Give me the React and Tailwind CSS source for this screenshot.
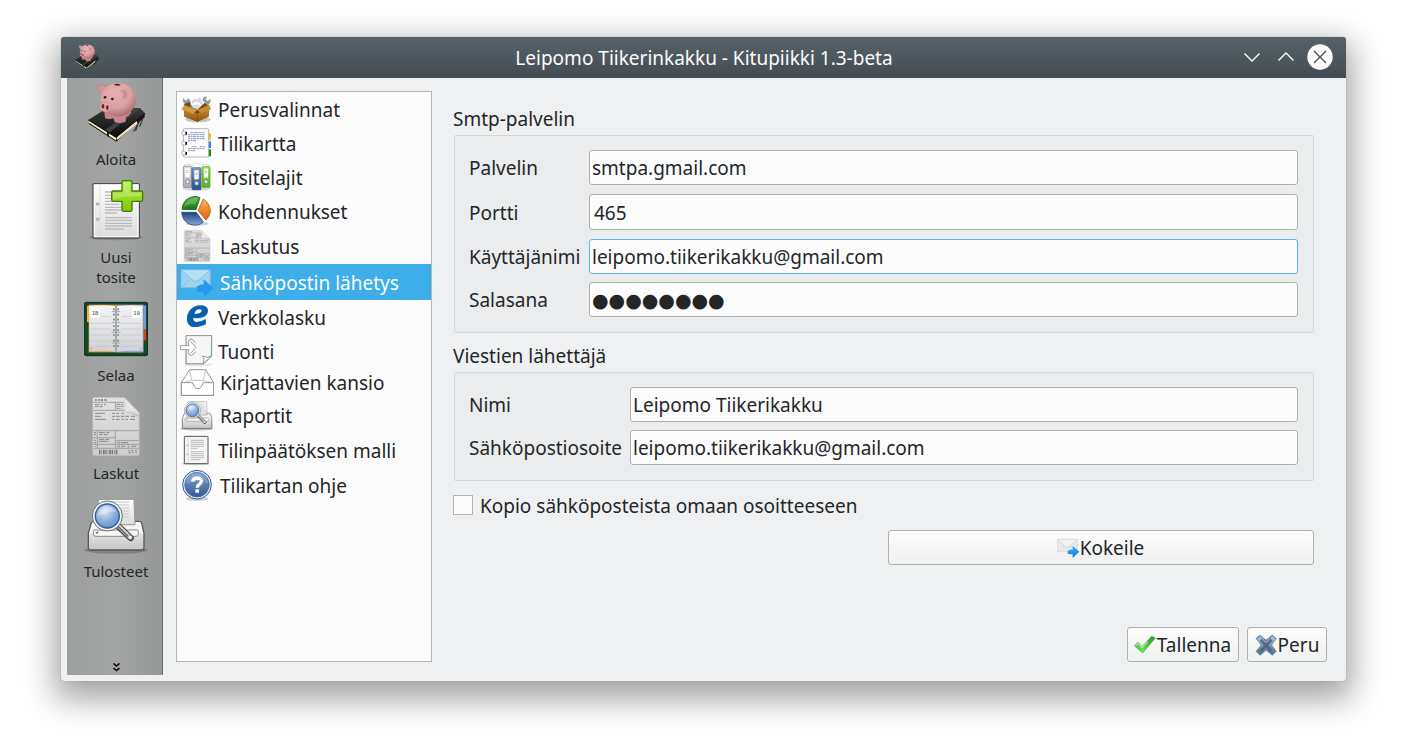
import React from "react";

function Gradient({ id, from, to, horizontal }) {
  return (
    <linearGradient id={id} x1="0" y1="0" x2={horizontal ? "1" : "0"} y2={horizontal ? "0" : "1"}>
      <stop offset="0" stopColor={from} />
      <stop offset="1" stopColor={to} />
    </linearGradient>
  );
}

function SharedGradients() {
  return (
    <svg className="absolute h-0 w-0" aria-hidden="true">
      <defs>
        <radialGradient id="pig" cx="0.4" cy="0.3" r="0.75">
          <stop offset="0" stopColor="#e6b0b3" />
          <stop offset="0.6" stopColor="#dba0a4" />
          <stop offset="1" stopColor="#a5666c" />
        </radialGradient>
        <radialGradient id="lens" cx="0.4" cy="0.3" r="0.8">
          <stop offset="0" stopColor="#dbe8f6" />
          <stop offset="0.5" stopColor="#8fb1da" />
          <stop offset="1" stopColor="#5d88c2" />
        </radialGradient>
        <Gradient id="cover" from="#3a3a3a" to="#0c0c0c" />
        <Gradient id="paper" from="#ffffff" to="#dcdcdc" />
        <Gradient id="plus" from="#b5ee3c" to="#7fc810" />
        <Gradient id="page" from="#f4f4f5" to="#cfd1d4" />
        <Gradient id="bill" from="#e2e2e2" to="#cdcdcd" />
        <Gradient id="tray" from="#fafafa" to="#c4c4c4" />
        <Gradient id="carton" from="#c9872c" to="#8a5409" />
        <Gradient id="bluebinder" from="#7fa0cf" to="#2a5090" />
        <Gradient id="greenbinder" from="#a3e84c" to="#57b512" />
        <Gradient id="greybinder" from="#dedede" to="#b0b0b0" />
        <Gradient id="piegreen" from="#5cb84a" to="#0c7612" />
        <Gradient id="pieorange" from="#ffb45c" to="#dd6108" />
        <Gradient id="pieblue" from="#1d3f78" to="#86a9d8" />
        <Gradient id="help" from="#7e9fcc" to="#345c99" />
        <Gradient id="arrow" from="#3fb4f5" to="#0c78dc" />
        <Gradient id="tick" from="#2a9a28" to="#6df05c" />
        <Gradient id="cross" from="#b9cbdc" to="#4c6685" />
      </defs>
    </svg>
  );
}

function PigDrawing() {
  return (
    <>
      <path d="M116 272 L210 232 L284 249 L286 256 L199 335 L117 283 Z" fill="#4b4b48" opacity=".35" />
      <path d="M117 270 L117 279 L197 333 L200 321 Z" fill="#f1e5bf" />
      <path d="M199 321 L198 333 L284 262 L283 249 Z" fill="#151515" />
      <path d="M200 322 L200 331 L262 281 L260 272 Z" fill="#efe3bd" />
      <path d="M115 270 L170 235 L270 234 L285 250 L198 322 Z" fill="url(#cover)" />
      <path d="M164 301 L258 234 L269 237 L176 309 Z" fill="#3f4143" />
      <path d="M171 304 L177 309 L176 321 L171 318 Z" fill="#171717" />
      <path d="M115 270 L198 322 L285 250" fill="none" stroke="#090909" strokeWidth="3" />
      <path d="M117 280 L198 333 L205 329" fill="none" stroke="#111" strokeWidth="3" />
      <path d="M250 305 L281 254 M257 303 L263 283 M269 290 L279 264" stroke="#222" strokeWidth="3" fill="none" />
      <path d="M162 235 L165 264 Q175 269 190 265 L194 276 Q208 283 227 275 L228 261 Q237 258 243 248 L245 215 Z" fill="#c8858a" />
      <path d="M141 167 Q158 162 172 169 L158 193 Q145 190 141 167 Z" fill="#d39296" stroke="#aa7075" strokeWidth="1" />
      <ellipse cx="205" cy="209" rx="53" ry="50" fill="url(#pig)" />
      <path d="M210 184 Q225 172 232 187 Q236 201 223 208 Q213 203 221 194 Q219 186 210 184 Z" fill="#c18a8e" opacity=".75" />
      <path d="M191 164 Q202 158 213 165 Q202 170 191 164 Z" fill="#5a2529" />
      <ellipse cx="167" cy="231" rx="18" ry="15" fill="#e0a4a8" stroke="#bd7c82" strokeWidth="1" />
      <ellipse cx="159" cy="229" rx="4" ry="7" fill="#6b272d" />
      <ellipse cx="172" cy="233" rx="4" ry="7" fill="#6b272d" />
      <circle cx="165" cy="202" r="4" fill="#2b1518" />
      <circle cx="187" cy="207" r="4" fill="#2b1518" />
    </>
  );
}

function PigIcon({ className }) {
  return (
    <svg className={className} viewBox="102 150 192 192">
      <PigDrawing />
    </svg>
  );
}

function NewReceiptIcon({ className }) {
  return (
    <svg className={className} viewBox="54 9 192 192">
      <ellipse cx="150" cy="187" rx="82" ry="9" fill="#555" opacity=".35" />
      <rect x="81" y="26" width="139" height="163" rx="4" fill="url(#paper)" stroke="#4f4f4f" strokeWidth="4" />
      <rect x="85" y="30" width="131" height="155" fill="none" stroke="#fff" strokeWidth="3" />
      <path d="M102 30 V185" stroke="#d4d4d4" strokeWidth="2" />
      <g fill="#fff" stroke="#777" strokeWidth="2.5">
        <circle cx="95" cy="87" r="3.5" />
        <circle cx="95" cy="133" r="3.5" />
      </g>
      <path d="M117 51 H160 M117 61 H150 M117 70 H145 M117 79 H150 M117 88 H160 M117 97 H198 M117 105 H198 M117 114 H153 M117 128 H198 M117 136 H198 M117 145 H198 M117 153 H198 M117 162 H174" stroke="#bcbcbc" strokeWidth="4" />
      <path d="M168 22 Q168 17 173 17 H192 Q198 17 198 22 V48 H225 Q230 48 230 53 V74 Q230 79 225 79 H198 V104 Q198 109 193 109 H173 Q168 109 168 104 V79 H142 Q137 79 137 74 V53 Q137 48 142 48 H168 Z" fill="url(#plus)" stroke="#437b08" strokeWidth="4" />
      <path d="M172 22 H193 V53 H225 V63 Q160 64 141 74 V53 H172 Z" fill="#fff" opacity=".23" />
    </svg>
  );
}

function PlannerIcon({ className }) {
  return (
    <svg className={className} viewBox="54 3 192 192">
      <rect x="55" y="22" width="190" height="160" rx="6" fill="#12482a" stroke="#092d18" strokeWidth="3" />
      <path d="M63 32 H69 V81 H63 Z" fill="#ffae37" />
      <path d="M232 31 H240 V104 H232 Z" fill="#7796dc" />
      <path d="M232 104 H240 V136 H232 Z" fill="#df3b23" />
      <rect x="68" y="29" width="164" height="143" fill="#e8a044" />
      <rect x="151" y="30" width="81" height="142" fill="#89a6de" />
      <path d="M69 32 Q108 29 143 33 Q150 36 157 33 Q194 29 230 32 V168 Q190 166 150 170 Q110 166 70 169 Z" fill="url(#page)" />
      <path d="M104 65 H135 M168 65 H197 M74 85 H136 M166 85 H225 M74 102 H136 M166 102 H225 M74 120 H136 M166 120 H225 M74 138 H136 M166 138 H225 M80 154 H136 M166 154 H220" stroke="#c4c6c9" strokeWidth="2" />
      <rect x="74" y="39" width="27" height="29" rx="3" fill="#fff" />
      <rect x="199" y="39" width="27" height="29" rx="3" fill="#fff" />
      <g fontFamily="Liberation Sans, sans-serif" fontWeight="700" fontSize="18" fill="#77797c">
        <text x="77" y="59">18</text>
        <text x="202" y="59">19</text>
      </g>
      <path d="M150 32 V170" stroke="#999da0" strokeWidth="5" />
      <path d="M141 43 H159 M141 59 H159 M141 74 H159 M141 93 H159 M141 105 H159 M141 120 H159 M141 137 H159 M141 153 H159" stroke="#75797c" strokeWidth="5" strokeDasharray="5 8" />
      <path d="M137 50 H163 M137 83 H163 M137 112 H163 M137 144 H163" stroke="#a4a7a9" strokeWidth="3" />
      <path d="M73 158 L79 164 M227 158 L221 164" stroke="#777" strokeWidth="2" />
    </svg>
  );
}

function BillDrawing() {
  return (
    <>
      <path d="M84 22 H174 L220 69 V192 Q220 197 215 197 H85 Q80 197 80 192 V26 Q80 22 84 22 Z" fill="url(#bill)" stroke="#b3b3b3" strokeWidth="2" />
      <path d="M174 22 Q181 42 176 65 Q204 61 220 70 Z" fill="#e8e8e8" stroke="#bfbfbf" strokeWidth="1" />
      <path d="M178 68 Q202 65 219 75 V82 Q202 70 178 68 Z" fill="#aaa" opacity=".55" />
      <path d="M82 37 H174 M82 61 H175 M148 37 V61 M148 49 H174 M82 122 H219 M82 143 H148 M148 122 V175 M94 122 V175 M148 152 H219 M82 163 H219 M82 175 H219 M160 152 V175 M187 163 V175" fill="none" stroke="#a0a0a0" strokeWidth="3" />
      <path d="M86 44 H101 M105 44 H110 M114 44 H120 M86 50 H97 M100 50 H110 M152 43 H163 M166 43 H172 M152 55 H161 M165 55 H168 M87 70 H117 M87 79 H105 M87 88 H120 M138 70 H147 M150 70 H159 M167 70 H174 M138 79 H147 M150 79 H161 M165 79 H175 M178 79 H189 M195 79 H207 M138 88 H145 M150 88 H161 M167 88 H174 M178 88 H186 M192 88 H207 M99 128 H117 M121 128 H130 M99 134 H110 M114 134 H125 M99 148 H115 M119 148 H130 M99 154 H124 M127 154 H130 M84 128 H90 M84 134 H90 M84 151 H90 M84 158 H90 M87 169 H91 M153 158 H157 M165 158 H186 M153 169 H157 M165 169 H177 M196 169 H210 M187 182 H192 M195 182 H201 M205 182 H213 M187 188 H195 M198 188 H203 M208 188 H213" stroke="#888" strokeWidth="3" />
      <path d="M87 30 H92 M96 30 H101 M104 30 H111 M115 30 H122" stroke="#8c8c8c" strokeWidth="6" />
      <path d="M99 186 H154" stroke="#777" strokeWidth="13" strokeDasharray="4 3 2 3 5 2" />
    </>
  );
}

function BillIcon({ className }) {
  return (
    <svg className={className} viewBox="54 12 192 192">
      <BillDrawing />
    </svg>
  );
}

function ReportDrawing() {
  return (
    <>
      <ellipse cx="150" cy="181" rx="95" ry="10" fill="#444" opacity=".35" />
      <path d="M83 94 H219 Q224 94 227 99 L234 130 V173 Q234 180 227 180 H74 Q67 180 67 173 V130 L76 99 Q78 94 83 94 Z" fill="url(#tray)" stroke="#595959" strokeWidth="4" />
      <path d="M71 131 L80 99 H221 L230 131" fill="#f4f4f4" stroke="#fff" strokeWidth="2" />
      <path d="M86 120 H213 Q217 120 217 124 V133 Q217 139 209 139 H90 Q82 139 82 132 V125 Q82 120 86 120 Z" fill="#f7f7f7" stroke="#888" strokeWidth="3" />
      <path d="M99 28 H201 Q204 28 204 31 L207 104 H101 L97 32 Z" fill="url(#paper)" stroke="#969696" strokeWidth="3" />
      <path d="M126 36 H190 M144 45 H190 M150 54 H190 M152 63 H190 M155 72 H190 M160 81 H190" stroke="#c6c6c6" strokeWidth="3" />
      <path d="M151 103 L194 144" stroke="#484848" strokeWidth="19" strokeLinecap="round" />
      <path d="M151 103 L193 143" stroke="#bdbdbd" strokeWidth="12" strokeLinecap="round" />
      <path d="M154 99 L187 131" stroke="#f5f5f5" strokeWidth="3" strokeLinecap="round" />
      <path d="M155 109 L185 138" stroke="#666" strokeWidth="4" strokeLinecap="round" />
      <circle cx="193" cy="142" r="5" fill="#f3f3f3" />
      <circle cx="124" cy="78" r="45" fill="#f1f1f1" stroke="#707070" strokeWidth="3" />
      <circle cx="124" cy="78" r="36" fill="url(#lens)" stroke="#2e5f9e" strokeWidth="4" />
      <path d="M94 79 Q100 51 126 49 Q143 50 151 65 Q120 65 94 79 Z" fill="#fff" opacity=".32" />
      <path d="M88 128 L98 124 L94 132 Z" fill="#555" />
    </>
  );
}

function ReportIcon({ className }) {
  return (
    <svg className={className} viewBox="54 6 192 192">
      <ReportDrawing />
    </svg>
  );
}

function ToolboxIcon({ className }) {
  return (
    <svg className={className} viewBox="12 12 102 105">
      <ellipse cx="66" cy="94" rx="38" ry="9" fill="#000" opacity=".22" />
      <path d="M22 31 L27 38 L34 37 L36 31 L43 39 L39 46 L62 61 L54 68 L31 49 L22 43 Z" fill="#8f9ba5" stroke="#66737d" />
      <path d="M77 62 L88 45 L80 36 Q82 26 92 26 L88 35 L94 40 L103 35 Q104 45 95 49 L84 67 Z" fill="#8f9ba5" stroke="#66737d" />
      <path d="M49 39 Q55 31 62 36 L71 31 L79 46 L74 62 H49 Z" fill="#d7dfe5" stroke="#8da0af" />
      <path d="M48 51 Q63 39 74 52" fill="none" stroke="#fff" strokeWidth="6" />
      <path d="M25 47 L43 42 L43 58 L64 66 L85 45 L98 53 L98 85 L64 101 L25 85 Z" fill="#74460a" />
      <path d="M25 67 L64 76 L98 65 V86 L64 101 L25 86 Z" fill="url(#carton)" />
      <path d="M26 51 L64 66 L50 79 L17 64 Z" fill="#d29b43" stroke="#8d6018" />
      <path d="M64 66 L98 50 L104 63 L77 78 Z" fill="#c88a2d" stroke="#8d6018" />
      <path d="M64 68 V99" stroke="#74460a" strokeWidth="2" />
    </svg>
  );
}

function NotebookIcon({ className }) {
  return (
    <svg className={className} viewBox="12 117 102 102">
      <path d="M94 136 H105 V155 H94 Z" fill="#ffbf0d" />
      <path d="M94 160 H105 V180 H94 Z" fill="#287aff" />
      <path d="M94 184 H105 V205 H94 Z" fill="#168806" />
      <rect x="22" y="122" width="76" height="85" rx="3" fill="#fcfcfc" stroke="#aaa" strokeWidth="2.5" />
      <g fill="#fff" stroke="#999" strokeWidth="2">
        <path d="M30 130 H19 Q16 136 19 141 H30" />
        <path d="M30 160 H19 Q16 166 19 171 H30" />
        <path d="M30 190 H19 Q16 196 19 201 H30" />
      </g>
      <path d="M28 132 H33 V140 H28 Z M28 162 H33 V170 H28 Z M28 192 H33 V200 H28 Z" fill="#111" />
      <path d="M43 134 H86 M36 140 H87 M36 146 H84 M36 152 H87 M36 158 H61 M49 176 H62 M71 176 H88 M36 182 H87 M36 188 H57" stroke="#7385b2" strokeWidth="2.5" strokeDasharray="7 2 4 1 10 2" />
    </svg>
  );
}

function BindersIcon({ className }) {
  return (
    <svg className={className} viewBox="12 219 102 102">
      <ellipse cx="62" cy="301" rx="42" ry="8" fill="#000" opacity=".15" />
      <path d="M25 229 H45 V243 H25 Z" fill="#f8f8f8" stroke="#aaa" />
      <path d="M52 229 L57 226 L62 229 L68 226 L72 229 V242 H50 Z" fill="#fff" stroke="#aaa" />
      <path d="M80 230 H99 V243 H80 Z" fill="#f8f8f8" stroke="#aaa" />
      <rect x="22" y="235" width="25" height="63" rx="3" fill="url(#greybinder)" stroke="#777" strokeWidth="2" />
      <rect x="48" y="239" width="27" height="66" rx="3" fill="url(#bluebinder)" stroke="#365888" strokeWidth="2" />
      <rect x="78" y="236" width="24" height="62" rx="3" fill="url(#greenbinder)" stroke="#529425" strokeWidth="2" />
      <g fill="#fff">
        <rect x="28" y="241" width="13" height="27" />
        <rect x="55" y="247" width="13" height="27" />
        <rect x="84" y="242" width="12" height="27" />
      </g>
      <path d="M31 248 H38 M31 253 H38 M58 255 H65 M58 260 H65 M87 249 H93 M87 254 H93" stroke="#999" strokeWidth="2" />
      <g fill="#e9eef3" stroke="#586b80" strokeWidth="2">
        <circle cx="35" cy="281" r="6" />
        <circle cx="62" cy="286" r="6" />
        <circle cx="90" cy="281" r="6" />
      </g>
    </svg>
  );
}

function PieIcon({ className }) {
  return (
    <svg className={className} viewBox="12 321 102 102">
      <ellipse cx="63" cy="407" rx="35" ry="6" fill="#000" opacity=".18" />
      <path d="M18 364 Q22 327 60 325 L72 329 L60 365 Z" fill="url(#piegreen)" stroke="#156c18" strokeWidth="2.5" />
      <path d="M23 360 Q27 333 58 330 L65 332 L57 349 Q38 345 23 360 Z" fill="#fff" opacity=".2" />
      <path d="M82 333 Q105 350 103 372 Q101 386 90 396 L66 368 Z" fill="url(#pieorange)" stroke="#b95a08" strokeWidth="2.5" />
      <path d="M17 373 H61 L82 402 Q66 416 42 409 Q19 399 17 373 Z" fill="url(#pieblue)" stroke="#26487e" strokeWidth="2.5" />
    </svg>
  );
}

function SmallBillIcon({ className }) {
  return (
    <svg className={className} viewBox="12 9 102 105">
      <g transform="translate(-19.5 1) scale(.552 .535)">
        <BillDrawing />
      </g>
    </svg>
  );
}

function MailSelectedIcon({ className }) {
  return (
    <svg className={className} viewBox="12 114 102 108">
      <path d="M15 131 H103 V185 H15 Z" fill="#9fd2ed" stroke="#78b6da" strokeWidth="2" />
      <path d="M17 133 L51 163 Q59 169 67 163 L101 133" fill="#b5dff4" stroke="#76b5d8" strokeWidth="2" />
      <path d="M17 183 L45 158 M101 183 L73 158" stroke="#83bddc" strokeWidth="2" />
      <path d="M62 182 Q72 174 83 176 V160 L113 187 L84 214 V199 Q72 199 62 196 Z" fill="#2597ed" />
    </svg>
  );
}

function InvoiceEIcon({ className }) {
  return (
    <svg className={className} viewBox="12 222 102 105">
      <path
        fillRule="evenodd"
        d="M96 253 Q94 238 74 238 C47 238 31 260 33 281 C34 298 46 305 63 303 Q78 302 90 295 L89 279 Q74 288 62 288 Q51 287 52 275 C76 281 97 271 96 253 Z M55 263 Q60 249 72 250 Q79 250 76 257 Q71 265 55 263 Z"
        fill="#0861aa"
      />
    </svg>
  );
}

function ImportIcon({ className }) {
  return (
    <svg className={className} viewBox="12 327 102 102">
      <path d="M28 415 Q60 422 108 412 V418 Q70 425 28 419 Z" fill="#999" opacity=".2" />
      <path d="M30 329 H107 V390 L82 414 H30 Z" fill="url(#tray)" stroke="#8c8c8c" strokeWidth="3" />
      <path d="M33 332 H104 V388 L81 411 H33 Z" fill="#f6f6f6" />
      <path d="M82 413 Q87 400 80 390 Q93 398 107 390 Z" fill="#fff" stroke="#888" strokeWidth="2.5" />
      <path d="M12 359 H39 V347 L59 365 L39 383 V371 H12 Z" fill="#fff" />
      <path d="M12 359 H39 M12 371 H39 M13 359 V371 M39 359 Q33 349 40 341 Q47 336 54 345 L58 350 M39 371 Q34 379 40 386 Q46 392 53 384 L59 377 M44 347 L60 364 L44 382" fill="none" stroke="#888" strokeWidth="2.5" />
    </svg>
  );
}

function InboxIcon({ className }) {
  return (
    <svg className={className} viewBox="12 21 102 84">
      <path d="M16 62 L41 23 H89 L113 62 V100 H16 Z" fill="#fff" stroke="#808080" strokeWidth="2.5" strokeLinejoin="round" />
      <path d="M41 24 L47 55 H82 L89 24 M47 55 L23 62 M82 55 L106 62" fill="none" stroke="#aaa" strokeWidth="2" />
      <path d="M16 62 H50 Q54 79 66 80 Q78 79 81 62 H113 V100 H16 Z" fill="#fff" stroke="#808080" strokeWidth="2.5" strokeLinejoin="round" />
    </svg>
  );
}

function SmallReportIcon({ className }) {
  return (
    <svg className={className} viewBox="12 105 102 108">
      <g transform="translate(-16.5 104) scale(.53)">
        <ReportDrawing />
      </g>
    </svg>
  );
}

function DocumentIcon({ className }) {
  return (
    <svg className={className} viewBox="12 213 102 105">
      <ellipse cx="60" cy="305" rx="42" ry="5" fill="#000" opacity=".18" />
      <rect x="25" y="223" width="71" height="82" rx="2" fill="#f5f5f5" stroke="#555" strokeWidth="3" />
      <path d="M37 225 V303" stroke="#ccc" strokeWidth="2" />
      <path d="M44 235 H84 M44 241 H84 M44 247 H84 M44 253 H84 M44 259 H65 M44 269 H84 M44 275 H84 M44 281 H84 M44 287 H84 M44 293 H73" stroke="#b1b1b1" strokeWidth="2.5" />
      <path d="M32 250 H35 M32 277 H35" stroke="#777" strokeWidth="3" />
    </svg>
  );
}

function HelpIcon({ className }) {
  return (
    <svg className={className} viewBox="12 318 102 105">
      <ellipse cx="63" cy="410" rx="34" ry="7" fill="#000" opacity=".18" />
      <circle cx="63" cy="368" r="43" fill="#e9f0f9" stroke="#2d568f" strokeWidth="3" />
      <circle cx="63" cy="368" r="37" fill="url(#help)" stroke="#426ca7" strokeWidth="2" />
      <path d="M29 366 Q32 336 63 334 Q91 336 97 363 Q62 353 29 366 Z" fill="#fff" opacity=".14" />
      <path d="M50 359 Q51 348 64 348 Q77 349 76 358 Q75 364 69 368 Q64 371 64 377" fill="none" stroke="#fff" strokeWidth="10" />
      <rect x="58" y="382" width="11" height="10" fill="#fff" />
    </svg>
  );
}

function MailSendIcon({ className }) {
  return (
    <svg className={className} viewBox="524 48 69 72">
      <path d="M525 58 H585 V95 H525 Z" fill="#e9e9e9" stroke="#d2d2d2" strokeWidth="2" />
      <path d="M526 60 L550 80 Q555 84 560 80 L584 60" fill="#f3f3f3" stroke="#c8c8c8" strokeWidth="2" />
      <path d="M527 94 L546 77 M583 94 L564 77" stroke="#d1d1d1" strokeWidth="2" />
      <path d="M556 93 Q563 87 571 89 V77 L591 95 L571 114 V103 Q563 103 556 101 Z" fill="url(#arrow)" />
    </svg>
  );
}

function TickIcon({ className }) {
  return (
    <svg className={className} viewBox="750 338 72 72">
      <path d="M754 376 L765 366 L777 379 L806 348 L817 353 L779 398 Z" fill="url(#tick)" stroke="#4b9b45" strokeWidth="2" />
      <path d="M757 376 L765 369 L777 382 L794 364" fill="none" stroke="#d3f7ce" strokeWidth="4" opacity=".7" />
    </svg>
  );
}

function CrossIcon({ className }) {
  return (
    <svg className={className} viewBox="1110 336 72 72">
      <path d="M1116 353 L1127 342 L1146 357 L1165 342 L1177 353 L1163 372 L1177 391 L1165 403 L1146 388 L1128 403 L1116 391 L1131 372 Z" fill="url(#cross)" stroke="#6f88a2" strokeWidth="2" strokeLinejoin="round" />
      <path d="M1118 354 L1128 344 L1146 360 L1165 344 L1175 354" fill="none" stroke="#1f3550" strokeWidth="2.5" strokeDasharray="3 2" />
      <path d="M1130 356 L1162 390 M1163 356 L1130 390" stroke="#3f5e80" strokeWidth="9" opacity=".75" />
    </svg>
  );
}

const tools = [
  { label: "Aloita", Icon: PigIcon },
  { label: "Uusi\ntosite", Icon: NewReceiptIcon },
  { label: "Selaa", Icon: PlannerIcon },
  { label: "Laskut", Icon: BillIcon },
  { label: "Tulosteet", Icon: ReportIcon },
];

const pages = [
  { label: "Perusvalinnat", Icon: ToolboxIcon, size: "h-[35px]", low: true },
  { label: "Tilikartta", Icon: NotebookIcon, size: "h-[34px]" },
  { label: "Tositelajit", Icon: BindersIcon, size: "h-[34px]" },
  { label: "Kohdennukset", Icon: PieIcon, size: "h-[34px]" },
  { label: "Laskutus", Icon: SmallBillIcon, size: "h-[35px]", wide: true, low: true },
  { label: "Sähköpostin lähetys", Icon: MailSelectedIcon, size: "h-9", wide: true, low: true, selected: true },
  { label: "Verkkolasku", Icon: InvoiceEIcon, size: "h-[35px]", low: true },
  { label: "Tuonti", Icon: ImportIcon, size: "h-[34px]" },
  { label: "Kirjattavien kansio", Icon: InboxIcon, size: "h-7", wide: true },
  { label: "Raportit", Icon: SmallReportIcon, size: "h-9", wide: true, low: true },
  { label: "Tilinpäätöksen malli", Icon: DocumentIcon, size: "h-[35px]", low: true },
  { label: "Tilikartan ohje", Icon: HelpIcon, size: "h-[35px]", wide: true, low: true },
];

function TitleBar() {
  return (
    <header className="grid h-[41px] shrink-0 grid-cols-[1fr_auto_1fr] items-center rounded-t-[3px] bg-linear-to-b from-[#566168] to-[#454d54] text-[#fcfcfc]">
      <svg className="mb-[2px] ml-[13px] h-[26px] w-[26px]" viewBox="108 155 186 186">
        <PigDrawing />
      </svg>
      <h1 className="pt-[2px] pl-px text-[19px] leading-none whitespace-nowrap">Leipomo Tiikerinkakku - Kitupiikki 1.3-beta</h1>
      <svg className="mr-[12px] mb-px h-[28px] w-[94px] justify-self-end" viewBox="0 0 94 28" fill="none" stroke="#fcfcfc" strokeWidth="1.4">
        <path d="M4.500 10.500 L12 18 L19.500 10.500 M38.500 17.500 L46 10 L53.500 17.500" />
        <circle cx="80" cy="14" r="12.7" fill="#fcfcfc" stroke="none" />
        <path d="M74 8 L86 20 M86 8 L74 20" stroke="#475057" />
      </svg>
    </header>
  );
}

function ToolSidebar() {
  return (
    <nav className="flex w-[96px] shrink-0 flex-col items-center border-r border-[#6d6e6e] bg-linear-to-r from-[#9d9e9e] via-[#a3a4a4] to-[#969797] pl-[3px]">
      {tools.map(({ label, Icon }) => (
        <div key={label} className="flex flex-col items-center pt-[2px] pb-[7px]">
          <Icon className="h-16 w-16" />
          <span className="mt-[5px] text-center text-[15px] leading-5 whitespace-pre">{label}</span>
        </div>
      ))}
      <svg className="mt-auto mb-[3px] h-[9px] w-[7px]" viewBox="0 0 7 9" fill="none" stroke="#000" strokeWidth="1.5">
        <path d="M.5 .5 L3.500 3 L6.500 .5 M.5 5 L3.500 7.500 L6.500 5" />
      </svg>
    </nav>
  );
}

function PageList() {
  return (
    <ul className="mt-[13px] mb-[13px] ml-[13px] w-[256px] shrink-0 border border-[#b4b6b8] bg-[#fcfcfc]">
      {pages.map(({ label, Icon, size, wide, low, selected }) => (
        <li
          key={label}
          className={`flex items-center pl-[3px] ${size} ${selected ? "bg-[#3daee9] text-[#fcfcfc]" : ""}`}
        >
          <Icon className={`w-[34px] shrink-0 ${size}`} />
          <span className={`leading-none whitespace-nowrap ${wide ? "ml-[6px]" : "ml-1"} ${low ? "pt-[2px]" : ""}`}>
            {label}
          </span>
        </li>
      ))}
    </ul>
  );
}

function Field({ label, labelWidth, inputClass, focused, children }) {
  return (
    <div className="flex items-center">
      <span className={`shrink-0 pt-[2px] leading-none whitespace-nowrap ${labelWidth}`}>{label}</span>
      <div
        className={`flex flex-1 items-center rounded-[3px] border bg-[#fcfcfc] pt-[2px] leading-none ${
          focused ? "border-[#5fb5e2]" : "border-[#acaeaf]"
        } ${inputClass}`}
      >
        {children}
      </div>
    </div>
  );
}

function Button({ className, children }) {
  return (
    <button
      className={`flex h-[35px] items-center justify-center rounded-[3px] border border-[#aeb0b1] bg-linear-to-b from-[#fdfdfd] to-[#eff0f0] leading-none whitespace-nowrap ${className}`}
    >
      {children}
    </button>
  );
}

function SettingsForm() {
  return (
    <main className="flex flex-1 flex-col pt-[31px] pr-[19px] pb-[13px] pl-[21px]">
      <div className="mr-[13px] flex flex-col">
        <h2 className="h-5 leading-5">Smtp-palvelin</h2>
        <section className="mt-[6px] ml-px flex h-[198px] flex-col rounded-[2px] border border-[#d4d6d7] bg-[#ebeced] pt-[14px] pr-[15px] pl-[14px]">
          <Field label="Palvelin" labelWidth="w-[120px]" inputClass="h-[35px] pl-[2px]">smtpa.gmail.com</Field>
          <div className="mt-[9px]">
            <Field label="Portti" labelWidth="w-[120px]" inputClass="h-9 pl-1">465</Field>
          </div>
          <div className="mt-[9px]">
            <Field label="Käyttäjänimi" labelWidth="w-[120px]" inputClass="h-[35px] pl-[2px]" focused>
              leipomo.tiikerikakku@gmail.com
            </Field>
          </div>
          <div className="mt-2">
            <Field label="Salasana" labelWidth="w-[120px]" inputClass="h-[35px] pl-[2px]">
              <span className="font-['DejaVu_Sans',sans-serif] text-[19px]">●●●●●●●●</span>
            </Field>
          </div>
        </section>
        <h2 className="mt-[13px] h-5 leading-5">Viestien lähettäjä</h2>
        <section className="mt-[6px] ml-px flex h-[109px] flex-col gap-2 rounded-[2px] border border-[#d4d6d7] bg-[#ebeced] pt-[14px] pr-[15px] pl-[14px]">
          <Field label="Nimi" labelWidth="w-[161px]" inputClass="h-[35px] pl-[2px]">Leipomo Tiikerikakku</Field>
          <Field label="Sähköpostiosoite" labelWidth="w-[161px]" inputClass="h-[35px] pl-[2px]">
            leipomo.tiikerikakku@gmail.com
          </Field>
        </section>
        <label className="mt-[14px] flex h-5 items-center">
          <span className="h-5 w-5 border border-[#b2b4b5] bg-[#fcfcfc]" />
          <span className="ml-[7px] pt-[2px] leading-none">Kopio sähköposteista omaan osoitteeseen</span>
        </label>
        <Button className="mt-[15px] w-[426px] self-end pr-px">
          <MailSendIcon className="h-6 w-[23px]" />
          <span className="pt-[2px]">Kokeile</span>
        </Button>
      </div>
      <footer className="mt-auto flex justify-end gap-2">
        <Button className="w-[112px] pr-[2px]">
          <TickIcon className="h-6 w-6" />
          <span className="pt-[2px]">Tallenna</span>
        </Button>
        <Button className="w-20 pr-px">
          <CrossIcon className="h-6 w-6" />
          <span className="pt-[2px]">Peru</span>
        </Button>
      </footer>
    </main>
  );
}

export default function App() {
  return (
    <div className="flex h-[742px] w-[1407px] overflow-hidden bg-white pt-[37px] pl-[61px] font-['Noto_Sans',sans-serif] text-[19px] text-[#232629]">
      <SharedGradients />
      <div className="flex h-[644px] w-[1285px] flex-col rounded-[3px] bg-[#eff0f1] shadow-[0_0_1px_rgba(0,0,0,0.45),0_12px_32px_6px_rgba(0,0,0,0.37)]">
        <TitleBar />
        <div className="flex min-h-0 flex-1 pl-[6px]">
          <div className="flex pb-[6px]">
            <ToolSidebar />
          </div>
          <div className="flex flex-1 pb-[6px]">
            <PageList />
            <SettingsForm />
          </div>
        </div>
      </div>
    </div>
  );
}
